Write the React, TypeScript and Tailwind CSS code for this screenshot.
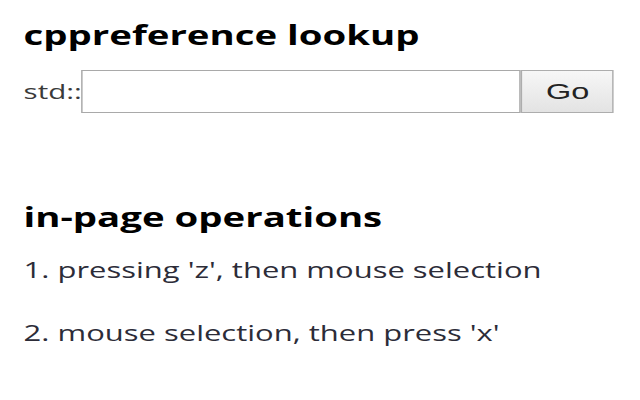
export default function App() {
  return (
    <div className="w-[640px] h-[400px] overflow-hidden bg-white">
      {/* the page is laid out at its natural width, then stretched horizontally like the shot */}
      <div className="w-[436px] origin-left scale-x-[1.475] pl-[16px] pt-[18px] font-['Open_Sans','Noto_Sans',sans-serif] text-[#222]">
        <h1 className="text-[26px] font-bold leading-[34px] text-black">cppreference lookup</h1>
        <div className="mt-[18px] flex items-center">
          <span className="text-[20px] text-[#3a3a3a]">std::</span>
          <input
            type="text"
            className="w-[298px] h-[43px] border border-[#a9a9a9] bg-white px-1 outline-none"
          />
          <button className="w-[63px] h-[43px] border border-[#adadad] bg-gradient-to-b from-[#f7f7f7] to-[#e3e3e3] font-['Liberation_Sans',Arial,sans-serif] text-[22px] text-[#222]">
            Go
          </button>
        </div>
        <h2 className="mt-[87px] text-[26px] font-bold leading-[34px] text-black">in-page operations</h2>
        <p className="mt-[22px] text-[21px] leading-[28px] text-[#2c2c38]">1. pressing 'z', then mouse selection</p>
        <p className="mt-[35px] text-[21px] leading-[28px] text-[#2c2c38]">2. mouse selection, then press 'x'</p>
      </div>
    </div>
  )
}
